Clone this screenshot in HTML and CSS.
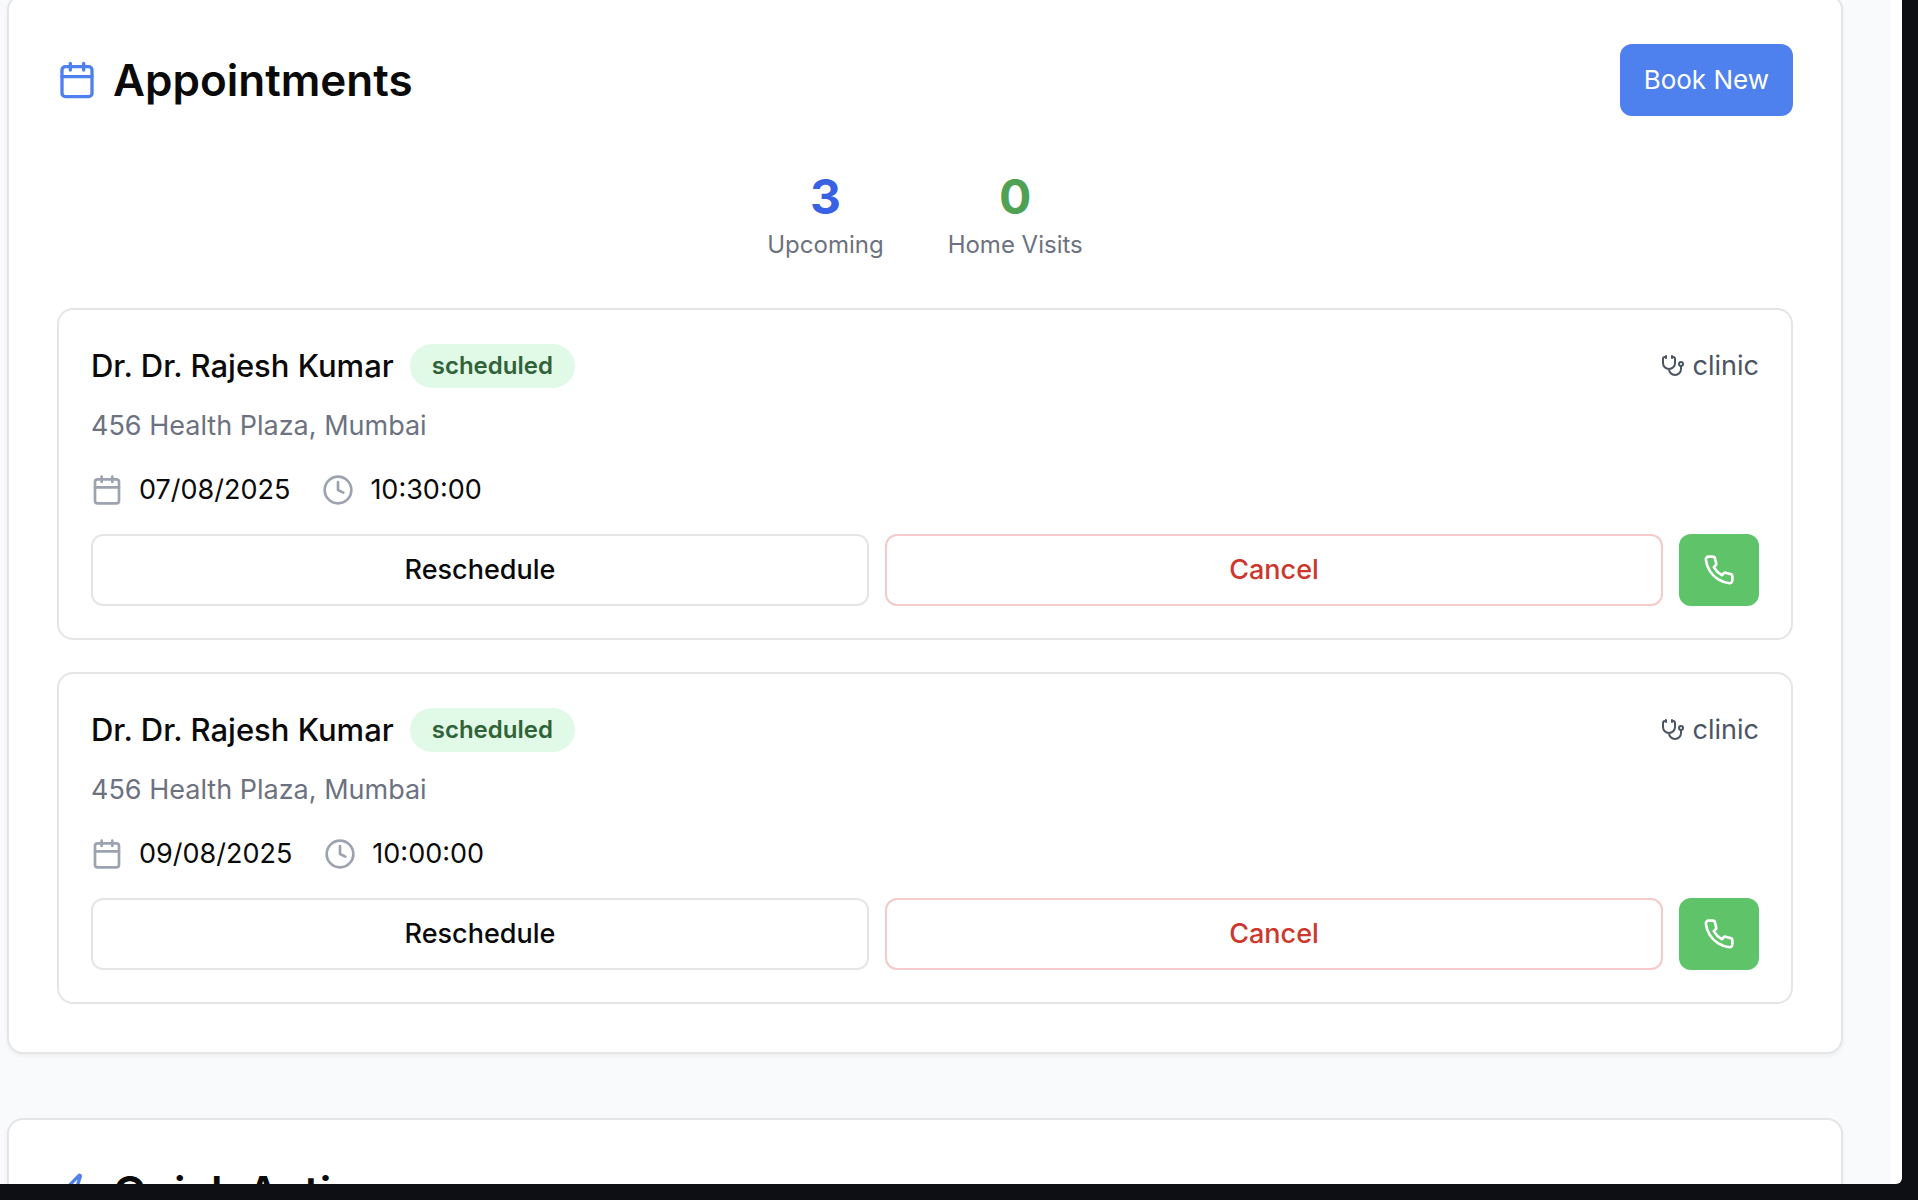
FILE: index.html
```html
<!DOCTYPE html>
<html lang="en">
<head>
<meta charset="utf-8">
<title>Appointments</title>
<meta name="viewport" content="width=device-width, initial-scale=1">
<link rel="stylesheet" href="styles.css">
</head>
<body>
<svg class="sprite" aria-hidden="true">
  <symbol id="calendar" viewBox="0 0 24 24"><path d="M8 2v4M16 2v4M3 10h18"/><rect width="18" height="18" x="3" y="4" rx="2"/></symbol>
  <symbol id="clock" viewBox="0 0 24 24"><circle cx="12" cy="12" r="10"/><path d="M12 6v6l4 2"/></symbol>
  <symbol id="stethoscope" viewBox="0 0 24 24"><path d="M11 2v2M5 2v2M5 3H4a2 2 0 0 0-2 2v4a6 6 0 0 0 12 0V5a2 2 0 0 0-2-2h-1M8 15a6 6 0 0 0 12 0v-3"/><circle cx="20" cy="10" r="2"/></symbol>
  <symbol id="phone" viewBox="0 0 24 24"><path d="M22 16.92v3a2 2 0 0 1-2.18 2 19.79 19.79 0 0 1-8.63-3.07 19.5 19.5 0 0 1-6-6 19.79 19.79 0 0 1-3.07-8.67A2 2 0 0 1 4.11 2h3a2 2 0 0 1 2 1.72 12.84 12.84 0 0 0 .7 2.81 2 2 0 0 1-.45 2.11L8.09 9.91a16 16 0 0 0 6 6l1.27-1.27a2 2 0 0 1 2.11-.45 12.84 12.84 0 0 0 2.81.7A2 2 0 0 1 22 16.92z"/></symbol>
  <symbol id="zap" viewBox="0 0 24 24"><path d="M4 14a1 1 0 0 1-.78-1.63l9.9-10.2a.5.5 0 0 1 .86.46l-1.92 6.02A1 1 0 0 0 13 10h7a1 1 0 0 1 .78 1.63l-9.9 10.2a.5.5 0 0 1-.86-.46l1.92-6.02A1 1 0 0 0 11 14z"/></symbol>
</svg>
<div class="window">
  <main class="page">
    <section class="card">
      <header class="card-header">
        <h2 class="card-title"><svg class="icon icon-lg"><use href="#calendar"/></svg>Appointments</h2>
        <button type="button" class="btn btn-primary">Book New</button>
      </header>
      <div class="stats">
        <div class="stat"><div class="stat-value blue">3</div><div class="stat-label">Upcoming</div></div>
        <div class="stat"><div class="stat-value green">0</div><div class="stat-label">Home Visits</div></div>
      </div>
      <div class="appointments">
        <article class="appointment">
          <div class="row">
            <div class="doctor"><h3 class="name">Dr. Dr. Rajesh Kumar</h3><span class="badge">scheduled</span></div>
            <div class="place"><svg class="icon icon-sm"><use href="#stethoscope"/></svg>clinic</div>
          </div>
          <p class="address">456 Health Plaza, Mumbai</p>
          <div class="when">
            <div class="when-item"><svg class="icon"><use href="#calendar"/></svg>07/08/2025</div>
            <div class="when-item"><svg class="icon"><use href="#clock"/></svg>10:30:00</div>
          </div>
          <div class="actions">
            <button type="button" class="btn btn-outline">Reschedule</button>
            <button type="button" class="btn btn-outline btn-danger">Cancel</button>
            <button type="button" class="btn btn-call" aria-label="Call"><svg class="icon"><use href="#phone"/></svg></button>
          </div>
        </article>
        <article class="appointment">
          <div class="row">
            <div class="doctor"><h3 class="name">Dr. Dr. Rajesh Kumar</h3><span class="badge">scheduled</span></div>
            <div class="place"><svg class="icon icon-sm"><use href="#stethoscope"/></svg>clinic</div>
          </div>
          <p class="address">456 Health Plaza, Mumbai</p>
          <div class="when">
            <div class="when-item"><svg class="icon"><use href="#calendar"/></svg>09/08/2025</div>
            <div class="when-item"><svg class="icon"><use href="#clock"/></svg>10:00:00</div>
          </div>
          <div class="actions">
            <button type="button" class="btn btn-outline">Reschedule</button>
            <button type="button" class="btn btn-outline btn-danger">Cancel</button>
            <button type="button" class="btn btn-call" aria-label="Call"><svg class="icon"><use href="#phone"/></svg></button>
          </div>
        </article>
      </div>
    </section>
    <section class="card">
      <h2 class="card-title"><svg class="icon icon-lg"><use href="#zap"/></svg>Quick Actions</h2>
    </section>
  </main>
</div>
</body>
</html>
```
FILE: styles.css
```css
* { box-sizing: border-box; }

body {
  margin: 0;
  height: 100vh;
  padding: 0 16px 16px 0;
  overflow: hidden;
  background: #0e0f14;
  color: #0a0a0a;
  font-family: Inter, "Liberation Sans", sans-serif;
  font-size: 27px;
  line-height: 40px;
}

h2, h3, p { margin: 0; }

.sprite { display: none; }

.window {
  height: 100%;
  overflow: hidden;
  padding-right: 11px;
  background: #fff;
  border-bottom-right-radius: 6px;
}

.page {
  display: flex;
  flex-direction: column;
  gap: 64px;
  min-height: 100%;
  padding: 0 48px 0 7px;
  background: #f9fafc;
}

.page > .card:first-child { margin-top: -6px; }

.card {
  padding: 48px;
  background: #fff;
  border: 2px solid #e5e5e5;
  border-radius: 16px;
  box-shadow: 0 2px 4px rgba(0, 0, 0, 0.05);
}

.card-header,
.row {
  display: flex;
  align-items: center;
  justify-content: space-between;
}

.card-title {
  display: flex;
  align-items: center;
  gap: 16px;
  font-size: 44px;
  line-height: 48px;
  font-weight: 600;
}

.icon {
  flex: none;
  width: 32px;
  height: 32px;
  fill: none;
  stroke: currentColor;
  stroke-width: 2;
  stroke-linecap: round;
  stroke-linejoin: round;
}

.icon-lg { width: 40px; height: 40px; color: #4f81ee; }
.icon-sm { width: 24px; height: 24px; }

.btn {
  display: flex;
  align-items: center;
  justify-content: center;
  height: 72px;
  padding: 0 24px;
  border: 0;
  border-radius: 12px;
  background: #fff;
  color: inherit;
  font: inherit;
}

.btn-primary { background: #4f81ee; color: #fff; font-size: 26px; }
.btn-outline { flex: 1; border: 2px solid #e5e5e5; font-weight: 500; }
.btn-danger { border-color: #f5caca; color: #cb382d; }
.btn-call { background: #5fc36a; color: #fff; }

.stats {
  display: flex;
  justify-content: center;
  gap: 64px;
  margin: 49px 0 47px;
  text-align: center;
}

.stat-value { font-size: 48px; line-height: 64px; font-weight: 700; }
.stat-label { font-size: 24px; line-height: 32px; color: #6d7280; }
.blue { color: #3862e3; }
.green { color: #4fa254; }

.appointments { display: flex; flex-direction: column; gap: 32px; }

.appointment {
  padding: 32px;
  border: 2px solid #e5e5e5;
  border-radius: 16px;
}

.doctor { display: flex; align-items: center; gap: 16px; }
.name { font-size: 31px; line-height: 48px; font-weight: 500; }

.badge {
  padding: 6px 22px;
  border-radius: 22px;
  background: #e1f9e7;
  color: #306339;
  font-size: 24px;
  line-height: 32px;
  font-weight: 600;
}

.place { display: flex; align-items: center; gap: 8px; color: #4b5463; }
.address { margin-top: 16px; color: #6d7280; }

.when { display: flex; gap: 32px; margin: 24px 0; }
.when-item { display: flex; align-items: center; gap: 16px; }
.when .icon { color: #9ca2af; }

.actions { display: flex; gap: 16px; }
```
